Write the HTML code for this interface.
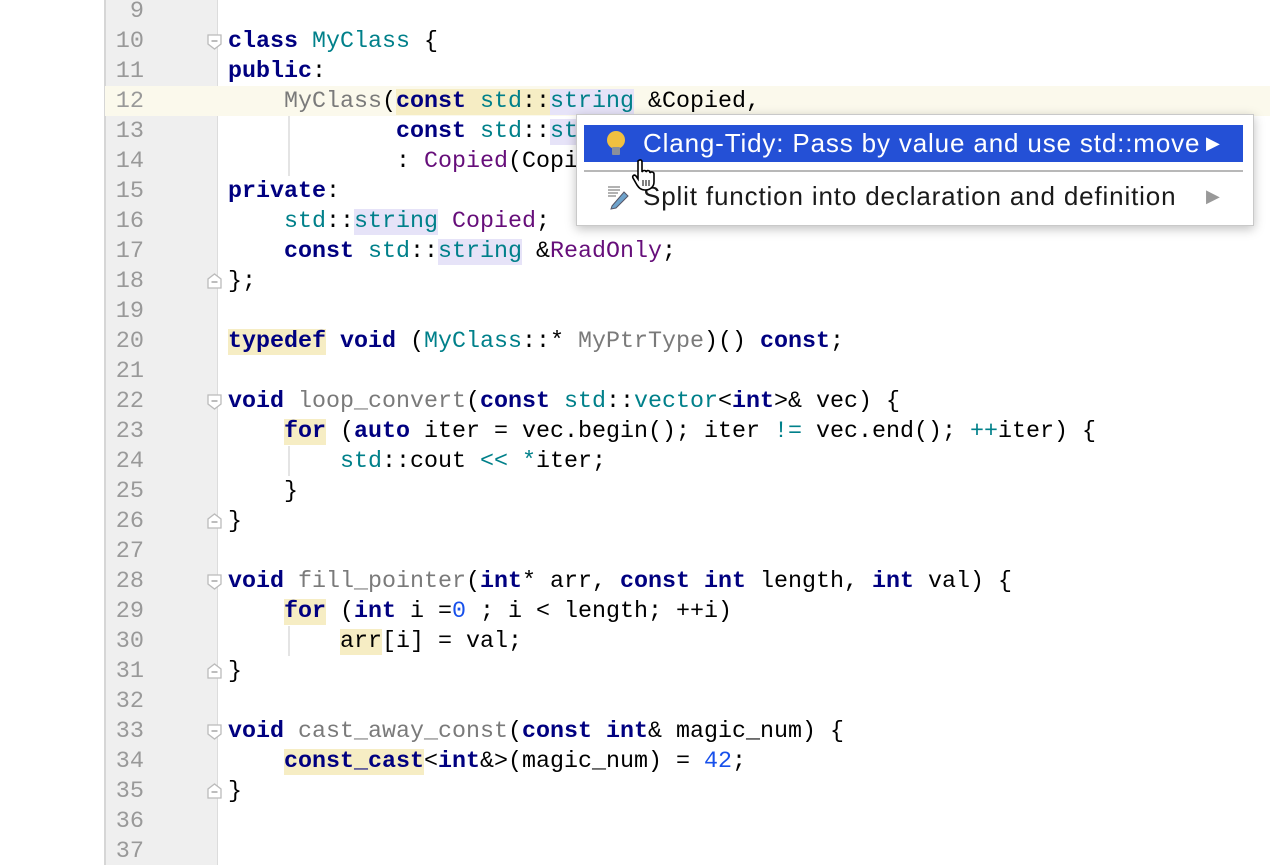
<!DOCTYPE html>
<html><head><meta charset="utf-8"><style>
body{margin:0;width:1270px;height:865px;overflow:hidden;background:#fff;position:relative;font-family:"Liberation Mono",monospace;}
#gut{position:absolute;left:104px;top:0;width:111px;height:865px;background:#efefef;border-left:2px solid #d6d6d6;border-right:1px solid #dcdcdc;}
.ln{position:absolute;left:104px;width:40px;text-align:right;font-size:23.5px;color:#999;height:30px;line-height:30px;margin-top:1px}
.l{position:absolute;left:228px;font-size:23.33px;height:30px;line-height:30px;white-space:pre;color:#000;margin-top:1px}
.k{color:#000080;font-weight:bold}
.t{color:#00808a}
.f{color:#7a7a7a}
.p{color:#660e7a}
.n{color:#1750eb}
.y{background:#f6edc4}
.v{background:#e6e3f8}
.cur{position:absolute;left:105px;width:1165px;top:86px;height:30px;background:#fbf9ec}
.fold{position:absolute;left:207px;width:15px;height:16px;}
.g{position:absolute;left:288px;width:2px;background:#e4e4e4}
#pop{position:absolute;left:576px;top:114px;width:676px;height:110px;background:#fff;border:1px solid #c9c9c9;box-shadow:0 3px 10px rgba(0,0,0,.25);font-family:"Liberation Sans",sans-serif;font-size:26px;letter-spacing:0.85px}
</style></head><body>
<div id="gut"></div>
<div class="cur"></div>
<div class="g" style="top:116px;height:60px"></div>
<div class="g" style="top:446px;height:30px"></div>
<div class="g" style="top:626px;height:30px"></div>
<div class="ln" style="top:-4px">9</div>
<div class="ln" style="top:26px">10</div>
<div class="ln" style="top:56px">11</div>
<div class="ln" style="top:86px">12</div>
<div class="ln" style="top:116px">13</div>
<div class="ln" style="top:146px">14</div>
<div class="ln" style="top:176px">15</div>
<div class="ln" style="top:206px">16</div>
<div class="ln" style="top:236px">17</div>
<div class="ln" style="top:266px">18</div>
<div class="ln" style="top:296px">19</div>
<div class="ln" style="top:326px">20</div>
<div class="ln" style="top:356px">21</div>
<div class="ln" style="top:386px">22</div>
<div class="ln" style="top:416px">23</div>
<div class="ln" style="top:446px">24</div>
<div class="ln" style="top:476px">25</div>
<div class="ln" style="top:506px">26</div>
<div class="ln" style="top:536px">27</div>
<div class="ln" style="top:566px">28</div>
<div class="ln" style="top:596px">29</div>
<div class="ln" style="top:626px">30</div>
<div class="ln" style="top:656px">31</div>
<div class="ln" style="top:686px">32</div>
<div class="ln" style="top:716px">33</div>
<div class="ln" style="top:746px">34</div>
<div class="ln" style="top:776px">35</div>
<div class="ln" style="top:806px">36</div>
<div class="ln" style="top:836px">37</div>

<svg class="fold" style="top:34px" viewBox="0 0 15 16"><path d="M1 1H14V10L7.5 15L1 10Z" fill="#fff" stroke="#bbb" stroke-width="1.3"/><path d="M4.5 7H10.5" stroke="#999" stroke-width="1.3"/></svg>
<svg class="fold" style="top:394px" viewBox="0 0 15 16"><path d="M1 1H14V10L7.5 15L1 10Z" fill="#fff" stroke="#bbb" stroke-width="1.3"/><path d="M4.5 7H10.5" stroke="#999" stroke-width="1.3"/></svg>
<svg class="fold" style="top:574px" viewBox="0 0 15 16"><path d="M1 1H14V10L7.5 15L1 10Z" fill="#fff" stroke="#bbb" stroke-width="1.3"/><path d="M4.5 7H10.5" stroke="#999" stroke-width="1.3"/></svg>
<svg class="fold" style="top:724px" viewBox="0 0 15 16"><path d="M1 1H14V10L7.5 15L1 10Z" fill="#fff" stroke="#bbb" stroke-width="1.3"/><path d="M4.5 7H10.5" stroke="#999" stroke-width="1.3"/></svg>
<svg class="fold" style="top:273px" viewBox="0 0 15 16"><path d="M1 15H14V6L7.5 1L1 6Z" fill="#fff" stroke="#bbb" stroke-width="1.3"/><path d="M4.5 9H10.5" stroke="#999" stroke-width="1.3"/></svg>
<svg class="fold" style="top:513px" viewBox="0 0 15 16"><path d="M1 15H14V6L7.5 1L1 6Z" fill="#fff" stroke="#bbb" stroke-width="1.3"/><path d="M4.5 9H10.5" stroke="#999" stroke-width="1.3"/></svg>
<svg class="fold" style="top:663px" viewBox="0 0 15 16"><path d="M1 15H14V6L7.5 1L1 6Z" fill="#fff" stroke="#bbb" stroke-width="1.3"/><path d="M4.5 9H10.5" stroke="#999" stroke-width="1.3"/></svg>
<svg class="fold" style="top:783px" viewBox="0 0 15 16"><path d="M1 15H14V6L7.5 1L1 6Z" fill="#fff" stroke="#bbb" stroke-width="1.3"/><path d="M4.5 9H10.5" stroke="#999" stroke-width="1.3"/></svg>

<div class="l" style="top:26px"><span class="k">class</span> <span class="t">MyClass</span> {</div>
<div class="l" style="top:56px"><span class="k">public</span>:</div>
<div class="l" style="top:86px">    <span class="f">MyClass</span>(<span class="y"><span class="k">const</span> <span class="t">std</span>::</span><span class="v t">string</span> &amp;Copied,</div>
<div class="l" style="top:116px">            <span class="k">const</span> <span class="t">std</span>::<span class="v t">string</span> &amp;ReadOnly)</div>
<div class="l" style="top:146px">            : <span class="p">Copied</span>(Copied), <span class="p">ReadOnly</span>(ReadOnly) {}</div>
<div class="l" style="top:176px"><span class="k">private</span>:</div>
<div class="l" style="top:206px">    <span class="t">std</span>::<span class="v t">string</span> <span class="p">Copied</span>;</div>
<div class="l" style="top:236px">    <span class="k">const</span> <span class="t">std</span>::<span class="v t">string</span> &amp;<span class="p">ReadOnly</span>;</div>
<div class="l" style="top:266px">};</div>
<div class="l" style="top:326px"><span class="k y">typedef</span> <span class="k">void</span> (<span class="t">MyClass</span>::* <span class="f">MyPtrType</span>)() <span class="k">const</span>;</div>
<div class="l" style="top:386px"><span class="k">void</span> <span class="f">loop_convert</span>(<span class="k">const</span> <span class="t">std</span>::<span class="t">vector</span>&lt;<span class="k">int</span>&gt;&amp; vec) {</div>
<div class="l" style="top:416px">    <span class="k y">for</span> (<span class="k">auto</span> iter = vec.begin(); iter <span class="t">!=</span> vec.end(); <span class="t">++</span>iter) {</div>
<div class="l" style="top:446px">        <span class="t">std</span>::cout <span class="t">&lt;&lt;</span> <span class="t">*</span>iter;</div>
<div class="l" style="top:476px">    }</div>
<div class="l" style="top:506px">}</div>
<div class="l" style="top:566px"><span class="k">void</span> <span class="f">fill_pointer</span>(<span class="k">int</span>* arr, <span class="k">const</span> <span class="k">int</span> length, <span class="k">int</span> val) {</div>
<div class="l" style="top:596px">    <span class="k y">for</span> (<span class="k">int</span> i =<span class="n">0</span> ; i &lt; length; ++i)</div>
<div class="l" style="top:626px">        <span class="y">arr</span>[i] = val;</div>
<div class="l" style="top:656px">}</div>
<div class="l" style="top:716px"><span class="k">void</span> <span class="f">cast_away_const</span>(<span class="k">const</span> <span class="k">int</span>&amp; magic_num) {</div>
<div class="l" style="top:746px">    <span class="k y">const_cast</span>&lt;<span class="k">int</span>&amp;&gt;(magic_num) = <span class="n">42</span>;</div>
<div class="l" style="top:776px">}</div>

<div id="pop">
 <div style="position:absolute;left:7px;top:10px;width:659px;height:37px;background:#2450d6;color:#fff;line-height:37px">
  <svg style="position:absolute;left:21px;top:5px" width="22" height="28" viewBox="0 0 22 28"><circle cx="11" cy="10" r="9" fill="#f0c040"/><rect x="7" y="17" width="8" height="8" rx="1" fill="#8a8f9a"/></svg>
  <span style="position:absolute;left:59px">Clang-Tidy: Pass by value and use std::move</span>
  <span style="position:absolute;left:622px;font-size:18px">&#9654;</span>
 </div>
 <div style="position:absolute;left:7px;top:55px;width:659px;height:2px;background:#b8b8b8"></div>
 <div style="position:absolute;left:7px;top:63px;width:659px;height:37px;line-height:37px;color:#1a1a1a">
  <svg style="position:absolute;left:22px;top:6px" width="24" height="26" viewBox="0 0 24 26"><path d="M2 3H14M2 6H14M2 9H12M2 12H10" stroke="#999" stroke-width="1.5"/><path d="M6 22L18 8L22 12L10 24L5 25Z" fill="#6ea3cc" stroke="#556"/></svg>
  <span style="position:absolute;left:59px">Split function into declaration and definition</span>
  <span style="position:absolute;left:622px;font-size:18px;color:#999">&#9654;</span>
 </div>
</div>
<svg style="position:absolute;left:630px;top:158px" width="34" height="34" viewBox="0 0 34 34"><path d="M8 3C10 1 12 2 12 4V14C13 12 16 12 16 14C17 12 20 12 20 15C21 13 24 14 24 16V24C24 29 20 32 15 32C11 32 9 30 7 27L3 20C2 18 4 16 6 18L8 21Z" fill="#fff" stroke="#000" stroke-width="1.6"/><path d="M13 22V28M16 22V28M19 22V28" stroke="#000"/></svg>
</body></html>
